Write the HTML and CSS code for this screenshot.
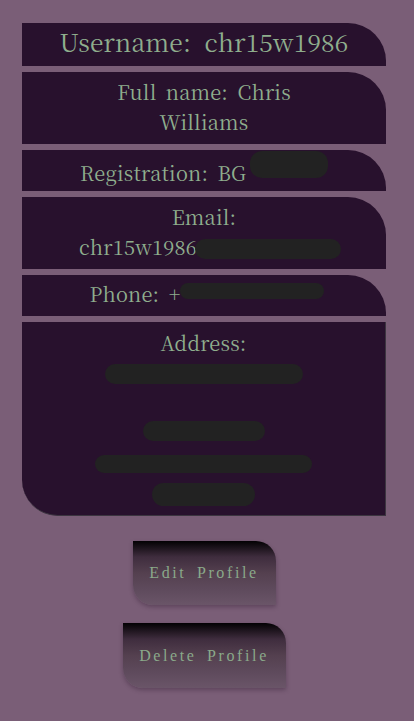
FILE: index.html
```html
<!DOCTYPE html>
<html>
<head>
<meta charset="utf-8">
<link rel="stylesheet" href="styles.css">
</head>
<body>
<main class="profile">
  <div class="card card-title"><span>Username: chr15w1986</span></div>
  <div class="card card-tall"><span>Full name: Chris<br>Williams</span></div>
  <div class="card card-row"><span class="reg-line">Registration: BG<span class="blob blob-reg"></span></span></div>
  <div class="card card-tall"><span>Email:<br><span class="nowrap email-line">chr15w1986<span class="blob blob-email"></span></span></span></div>
  <div class="card card-row"><span class="phone-line">Phone: +<span class="blob blob-phone"></span></span></div>
  <div class="card card-address">
    <div class="line">Address:</div>
    <div class="line"><span class="blob blob-a1"></span></div>
    <div class="line"></div>
    <div class="line"><span class="blob blob-a2"></span></div>
    <div class="line"><span class="blob blob-a3"></span></div>
    <div class="line"><span class="blob blob-a4"></span></div>
  </div>
  <div class="actions">
    <button class="btn btn-edit">Edit Profile</button>
    <button class="btn btn-delete">Delete Profile</button>
  </div>
</main>
</body>
</html>
```
FILE: styles.css
```css
html, body {
  margin: 0;
  padding: 0;
  background: #7a5e77;
  height: 100%;
}
body {
  font-family: "Noto Serif CJK SC", "Liberation Serif", serif;
  color: #8fae8d;
}
.profile {
  padding: 23px 28px 0 22px;
  display: flex;
  flex-direction: column;
  gap: 6px;
}
.card {
  box-sizing: border-box;
  background: #28112d;
  border-top-right-radius: 38px;
  display: flex;
  flex-direction: column;
  align-items: center;
  justify-content: center;
  text-align: center;
  font-size: 20px;
  letter-spacing: 0.2px;
  word-spacing: 4px;
  line-height: 30px;
  padding-bottom: 3px;
}
.card-title {
  height: 43px;
  font-size: 24.5px;
  letter-spacing: 0.2px;
  word-spacing: 7px;
  padding-bottom: 5px;
}
.card-tall {
  height: 72px;
}
.card-row {
  height: 41px;
}
.nowrap {
  white-space: nowrap;
}
.email-line {
  padding-left: 12px;
}
.phone-line {
  padding-left: 6px;
}
.card-address {
  height: 194px;
  border-radius: 0 0 0 36px;
  border-right: 1px solid #3c3540;
  border-bottom: 1px solid #3c3540;
  justify-content: flex-start;
  padding-top: 6px;
  padding-bottom: 0;
}
.line {
  height: 30px;
  display: flex;
  align-items: center;
  justify-content: center;
}
.blob {
  display: inline-block;
  background: #222222;
  border-radius: 12px;
  vertical-align: middle;
}
.blob-reg { width: 78px; height: 27px; margin-left: 4px; vertical-align: 3px; }
.blob-email { width: 146px; height: 20px; margin-left: -2px; }
.blob-phone { width: 144px; height: 16px; margin-left: 0; vertical-align: 3px; }
.blob-a1 { width: 198px; height: 20px; margin-top: 2px; }
.blob-a2 { width: 122px; height: 20px; margin-top: -4px; }
.blob-a3 { width: 217px; height: 18px; margin-top: 2px; }
.blob-a4 { width: 103px; height: 23px; margin-top: 2px; }
.actions {
  display: flex;
  flex-direction: column;
  align-items: center;
  gap: 18px;
  margin-top: 19px;
}
.btn {
  border: none;
  font-family: "Liberation Serif", "Times New Roman", serif;
  font-size: 16px;
  letter-spacing: 2.6px;
  word-spacing: 4px;
  color: #8aa98a;
  height: 64px;
  border-radius: 0 20px 0 20px;
  background: linear-gradient(to bottom, #030103 0%, #3f2d3e 25%, #54404f 50%, #5e4a5c 75%, #6a5568 100%);
  box-shadow: 0 2px 4px rgba(40, 20, 40, 0.35);
  padding: 0;
}
.btn-edit { width: 143px; }
.btn-delete { width: 163px; height: 65px; }
```
